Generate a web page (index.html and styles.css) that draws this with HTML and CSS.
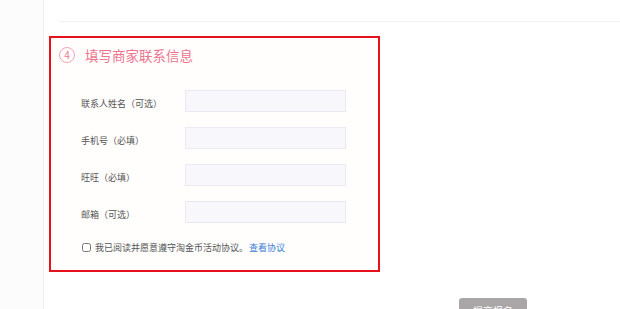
FILE: index.html
```html
<!DOCTYPE html>
<html lang="zh-CN">
<head>
    <meta charset="UTF-8">
    <meta name="viewport" content="width=device-width, initial-scale=1.0">
    <title>填写商家联系信息</title>
    <link rel="stylesheet" href="styles.css">
</head>
<body>

    <div class="page">
        <aside class="side"></aside>

        <main class="main">
            <div class="prev-section"></div>

            <section class="contact-box">
                <div class="step-title">
                    <span class="step-num">4</span>
                    <h2>填写商家联系信息</h2>
                </div>

                <form class="contact-form">
                    <div class="form-row">
                        <label for="contactName">联系人姓名（可选）</label>
                        <input type="text" id="contactName" class="form-input">
                    </div>
                    <div class="form-row">
                        <label for="mobile">手机号（必填）</label>
                        <input type="text" id="mobile" class="form-input">
                    </div>
                    <div class="form-row">
                        <label for="wangwang">旺旺（必填）</label>
                        <input type="text" id="wangwang" class="form-input">
                    </div>
                    <div class="form-row">
                        <label for="email">邮箱（可选）</label>
                        <input type="text" id="email" class="form-input">
                    </div>

                    <div class="agree-row">
                        <input type="checkbox" id="agree" class="agree-check">
                        <label for="agree">我已阅读并愿意遵守淘金币活动协议。</label>
                        <a href="#" class="agree-link">查看协议</a>
                    </div>
                </form>
            </section>

            <div class="actions">
                <button type="button" class="submit-btn">提交报名</button>
            </div>
        </main>
    </div>

</body>
</html>
```

FILE: styles.css
```css
body {
    margin: 0;
    padding: 0;
    background: #fff;
    font-family: "Noto Sans CJK SC", "Noto Sans", sans-serif;
    overflow: hidden;
}

.page {
    display: flex;
    height: 309px;
}

.side {
    width: 43px;
    flex-shrink: 0;
    background-color: #fcfcfd;
    border-right: 1px solid #eceef2;
}

.main {
    flex: 1;
    padding-left: 5px;
}

.prev-section {
    height: 21px;
    margin-left: 10px;
    border-bottom: 1px solid #f0f1f4;
}

.contact-box {
    box-sizing: border-box;
    width: 331px;
    margin-top: 14px;
    padding: 9px 0 16px 30px;
    border: 2px solid #e5121c;
    background-color: #fffefd;
}

.step-title {
    display: flex;
    align-items: center;
    margin-left: -22px;
    height: 16px;
}

.step-num {
    box-sizing: border-box;
    width: 16px;
    height: 16px;
    border: 1px solid #f4a3b5;
    border-radius: 50%;
    color: #ec7b93;
    font-size: 10px;
    line-height: 14px;
    text-align: center;
}

.step-title h2 {
    margin: 0 0 0 10px;
    font-size: 13.5px;
    font-weight: normal;
    color: #ee7590;
}

.contact-form {
    margin-top: 27px;
}

.form-row {
    display: flex;
    align-items: center;
    margin-bottom: 15px;
}

.form-row label {
    width: 104px;
    padding-top: 5px;
    font-size: 9px;
    color: #555;
}

.form-input {
    box-sizing: border-box;
    width: 161px;
    height: 22px;
    margin: 0;
    border: 1px solid #ebe9f1;
    background-color: #f8f7fb;
    outline: none;
}

.agree-row {
    display: flex;
    align-items: center;
    margin-top: 18px;
    font-size: 9px;
    color: #555;
}

.agree-check {
    width: 9px;
    height: 9px;
    margin: 0 4px 0 1px;
}

.agree-link {
    margin-left: 1px;
    color: #3d7dd6;
    text-decoration: none;
}

.actions {
    padding: 24px 0 0 410px;
}

.submit-btn {
    width: 68px;
    height: 26px;
    border: none;
    border-radius: 3px;
    background-color: #aaa6a8;
    color: #fff;
    font-family: inherit;
    font-size: 10px;
}
```
